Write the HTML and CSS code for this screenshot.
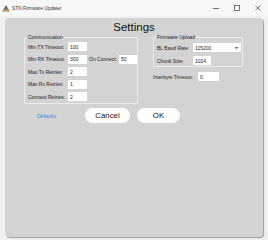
FILE: index.html
```html
<!DOCTYPE html>
<html lang="en">
<head>
  <meta charset="UTF-8">
  <meta name="viewport" content="width=device-width, initial-scale=1.0">
  <title>STN Firmware Updater</title>
  <link rel="stylesheet" href="styles.css">
</head>
<body>
  <div class="titlebar">
    <svg class="app-icon" width="8" height="7" viewBox="0 0 8 7">
      <path d="M4 0 L7.5 6 L0.5 6 Z" fill="#5a6f8c"/>
      <path d="M2 4 L6 4 L7.5 6.5 L0.5 6.5 Z" fill="#c08a5a"/>
    </svg>
    <span class="title">STN Firmware Updater</span>
    <div class="controls">
      <svg width="8" height="8" viewBox="0 0 8 8"><path d="M1 4.5 H7" stroke="#555" stroke-width="0.8"/></svg>
      <svg width="8" height="8" viewBox="0 0 8 8"><rect x="1.5" y="1.5" width="5" height="5" fill="none" stroke="#555" stroke-width="0.8"/></svg>
      <svg width="8" height="8" viewBox="0 0 8 8"><path d="M1.5 1.5 L6.5 6.5 M6.5 1.5 L1.5 6.5" stroke="#555" stroke-width="0.8"/></svg>
    </div>
  </div>

  <div class="client">
    <div class="panel">
      <h1>Settings</h1>

      <div class="groups">
        <fieldset class="group comm">
          <legend>Communication</legend>
          <div class="comm-grid">
            <label>Min TX Timeout:</label>
            <input class="field" value="100">
            <span></span><span></span>

            <label>Min RX Timeout:</label>
            <input class="field" value="300">
            <label class="sub-label">On Connect:</label>
            <input class="field" value="50">

            <label>Max Tx Retries:</label>
            <input class="field" value="2">
            <span></span><span></span>

            <label>Max Rx Retries:</label>
            <input class="field" value="1">
            <span></span><span></span>

            <label>Connect Retries:</label>
            <input class="field" value="2">
            <span></span><span></span>
          </div>
        </fieldset>

        <div class="right-col">
          <fieldset class="group fw">
            <legend>Firmware Upload</legend>
            <div class="fw-grid">
              <label>BL Baud Rate:</label>
              <div class="select">
                <span>115200</span>
                <svg width="5" height="4" viewBox="0 0 5 4"><path d="M0.5 1 L4.5 1 L2.5 3.2 Z" fill="#777"/></svg>
              </div>

              <label>Chunk Size:</label>
              <input class="field chunk" value="1024">
            </div>
          </fieldset>

          <div class="interbyte">
            <label>Interbyte Timeout:</label>
            <input class="field" value="0">
          </div>
        </div>
      </div>

      <div class="buttons">
        <a href="#" class="link">Defaults</a>
        <button class="btn cancel">Cancel</button>
        <button class="btn ok">OK</button>
      </div>
    </div>
  </div>
</body>
</html>
```

FILE: styles.css
```css
* {
  margin: 0;
  padding: 0;
  box-sizing: border-box;
}

body {
  width: 268px;
  height: 240px;
  overflow: hidden;
  font-family: "Liberation Sans", Arial, sans-serif;
  background: #f1f1f1;
  color: #222;
}

.titlebar {
  height: 16px;
  display: flex;
  align-items: center;
  background: #f7f7f7;
  padding-left: 2px;
}

.app-icon {
  margin-right: 2px;
}

.title {
  font-size: 4.8px;
  color: #333;
}

.controls {
  margin-left: auto;
  display: flex;
  gap: 13px;
  padding-right: 6px;
}

.client {
  padding: 2px 5px 3px 5px;
  height: 224px;
}

.panel {
  height: 219px;
  background: #d3d3d3;
  border-radius: 4px;
  box-shadow: 1px 1px 1px rgba(0, 0, 0, 0.35);
  padding: 3px 19px 0;
}

.panel h1 {
  font-size: 11.5px;
  font-weight: normal;
  line-height: 13px;
  text-align: center;
  color: #111;
}

.groups {
  display: flex;
  gap: 15px;
  align-items: flex-start;
}

.group {
  border: 1px solid #ececec;
  border-radius: 1px;
}

.group legend {
  font-size: 5px;
  line-height: 6px;
  padding: 0 1px;
  margin-left: -1px;
  color: #222;
}

label {
  font-size: 5px;
  color: #222;
  white-space: nowrap;
}

.field {
  height: 9px;
  border: none;
  background: #fff;
  font-family: inherit;
  font-size: 5px;
  color: #222;
  padding-left: 2px;
  outline: none;
}

.comm {
  width: 114px;
  padding: 2px 0 2px 3px;
}

.comm-grid {
  display: grid;
  grid-template-columns: 40px 19px 32px 18px;
  grid-auto-rows: 9px;
  row-gap: 3.5px;
  align-items: center;
}

.comm-grid .field {
  width: 100%;
}

.sub-label {
  padding-left: 2px;
}

.fw {
  width: 90px;
  padding: 3px 0 1px 3px;
}

.fw-grid {
  display: grid;
  grid-template-columns: 36px 48px;
  grid-auto-rows: 9px;
  row-gap: 4px;
  align-items: center;
}

.select {
  height: 9px;
  background: #fff;
  display: flex;
  align-items: center;
  justify-content: space-between;
  font-size: 5px;
  padding: 0 2px;
}

.chunk {
  width: 18px;
}

.interbyte {
  display: flex;
  align-items: center;
  margin-top: 5px;
}

.interbyte label {
  width: 45px;
}

.interbyte .field {
  width: 21px;
}

.buttons {
  display: flex;
  align-items: center;
  margin-top: 4px;
}

.link {
  font-size: 5.2px;
  color: #3d8ee0;
  text-decoration: none;
  margin-left: 13px;
  width: 48px;
}

.btn {
  height: 15px;
  border: none;
  border-radius: 8px;
  background: #fff;
  font-family: inherit;
  font-size: 7.8px;
  color: #111;
  cursor: pointer;
}

.cancel {
  width: 45px;
  margin-right: 7px;
}

.ok {
  width: 43px;
}
```
